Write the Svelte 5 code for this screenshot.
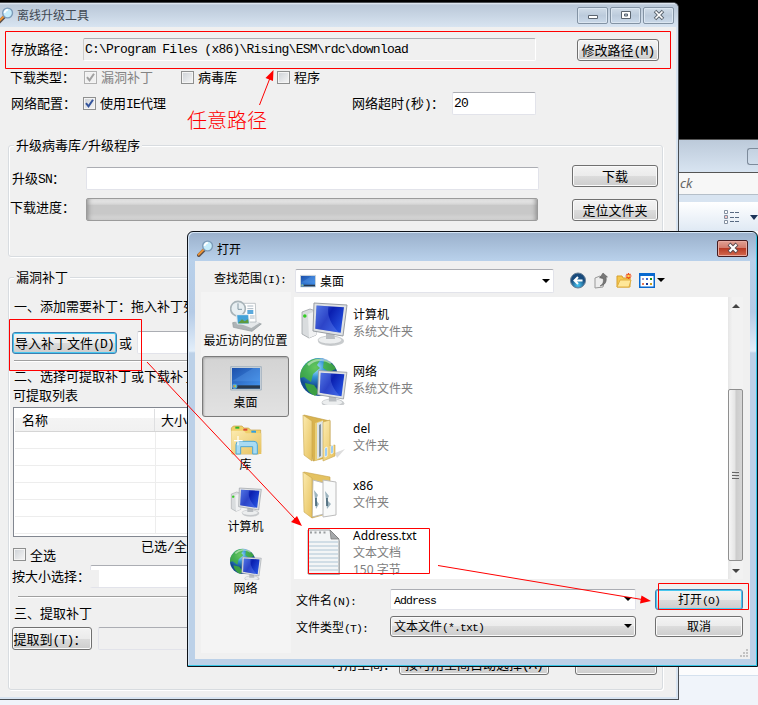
<!-- Offline update tool with its "open file" dialog and the red guide marks on top -->
<script lang="ts">
  type Icon = 'recent' | 'desktop' | 'library' | 'computer' | 'network' | 'del' | 'x86' | 'txt';

  const places: { name: string; icon: Icon; active?: boolean }[] = [
    { name: '最近访问的位置', icon: 'recent' },
    { name: '桌面', icon: 'desktop', active: true },
    { name: '库', icon: 'library' },
    { name: '计算机', icon: 'computer' },
    { name: '网络', icon: 'network' },
  ];

  const files: { name: string; icon: Icon; info: string[] }[] = [
    { name: '计算机', icon: 'computer', info: ['系统文件夹'] },
    { name: '网络', icon: 'network', info: ['系统文件夹'] },
    { name: 'del', icon: 'del', info: ['文件夹'] },
    { name: 'x86', icon: 'x86', info: ['文件夹'] },
    { name: 'Address.txt', icon: 'txt', info: ['文本文档', '150 字节'] },
  ];

  const types = [
    { name: '漏洞补丁', checked: true, disabled: true },
    { name: '病毒库', checked: false, disabled: false },
    { name: '程序', checked: false, disabled: false },
  ];

  // latin runs get the narrow monospace face, the rest stays CJK
  const runs = (text: string) =>
    text.split(/([\x20-\x7e]+)/).filter(Boolean).map(t => ({ t, latin: /^[\x20-\x7e]/.test(t) }));
</script>

{#snippet label(text: string)}
  {#each runs(text) as run}{#if run.latin}<span class="latin">{run.t}</span>{:else}{run.t}{/if}{/each}
{/snippet}

{#snippet check(checked: boolean, disabled: boolean)}
  <span class="check" class:check--off={disabled}>
    {#if checked}
      <svg width="11" height="11" viewBox="0 0 11 11"><path d="M2 5.2 4.5 8.3 9 1.8" fill="none" stroke={disabled ? '#a0a0a0' : '#34549c'} stroke-width="2" /></svg>
    {/if}
  </span>
{/snippet}

{#snippet magnifier()}
  <svg class="magnifier" width="17" height="17" viewBox="0 0 17 17">
    <path d="M1.8 15.2 7 10" stroke="#5c504c" stroke-width="3.6" stroke-linecap="round" />
    <path d="M1.6 14.6 6.4 9.8" stroke="#ef9433" stroke-width="2" stroke-linecap="round" />
    <circle cx="10.6" cy="6" r="4.9" fill="#c5ecfb" stroke="#7d9bb8" stroke-width="1.4" />
    <path d="M7.6 6a3 3 0 0 1 3.2-3" fill="none" stroke="#fff" stroke-width="1.8" />
  </svg>
{/snippet}

{#snippet monitor()}
  <ellipse cx="31" cy="41" rx="13" ry="5" fill="#c9ccce" />
  <ellipse cx="30" cy="40" rx="12" ry="4" fill="#eceeef" stroke="#b3b7ba" stroke-width=".6" />
  <path d="M26 31h8l1 8h-9z" fill="#b9bdc1" />
  <path d="m14 3 33 2-4 31-30-5z" fill="#dfe2e4" stroke="#989da3" stroke-width="1" />
  <path d="m16.500 5.500 27.500 1.700-3.300 25.600-25.400-4z" fill="url(#screen)" />
  <path d="m16.500 5.500 12 .8c-2 10 3 18 10 26l-23.200-3.500z" fill="#7d9dff" opacity=".3" />
{/snippet}

{#snippet picture(icon: Icon, size: number)}
  <svg width={size} height={size} viewBox="0 0 48 48">
    {#if icon === 'computer'}
      <path d="m2 12 8-3 6 2v24l-7 3-7-4z" fill="#d9dcde" stroke="#9da1a5" stroke-width=".8" />
      <path d="m8 14 8-3v24l-7 3z" fill="#f0f1f2" />
      <circle cx="4.800" cy="16" r="1.800" fill="#35cc24" />
      {@render monitor()}
    {:else if icon === 'network'}
      <circle cx="19" cy="20" r="19" fill="url(#globe)" />
      <path d="M4 9c5-7 12-8 17-7l-4 6 3 3-7 6-2 8-7-5-4 1c0-5 1-9 4-12zM24 3c6 1 10 5 12 9l-7 3-6-4zM5 26l9 2 5 7-4 4C9 36 6 32 5 26z" fill="#4bb929" opacity=".75" />
      <path d="M8 8c6-6 16-7 23-2" fill="none" stroke="#fff" stroke-width="2.500" opacity=".45" />
      <g transform="translate(6.500 11) scale(.86)">{@render monitor()}</g>
    {:else if icon === 'desktop'}
      <path d="M1 7h46v35H1z" fill="#cad4dc" stroke="#8fa3b4" stroke-width="1" />
      <path d="M3 9h42v31H3z" fill="url(#desk)" />
      <path d="M3 29 35 9h10v20z" fill="#63a6f2" opacity=".3" />
      <path d="M3 35h42v5H3z" fill="#28394c" />
      <circle cx="7" cy="36.500" r="4" fill="#4aa0dd" />
      <path d="M5 35h2v3H5z" fill="#f2742f" /><path d="M7 35h2v3H7z" fill="#9ee34c" />
    {:else if icon === 'library'}
      <path d="M2 6 5 3h13l3 3h7l3 3h15v33l-3 3H3z" fill="#f0d068" stroke="#c7a147" stroke-width="1" />
      <path d="M2 10h19l3 4h23v31H2z" fill="url(#folder)" />
      <path d="M8 4h6v3H8z" fill="#2fb52f" /><path d="M20 7h6v3h-6z" fill="#db4a37" /><path d="M32 10h7v3h-7z" fill="#2f9fe4" />
      <path d="M9 45V31q0-5 5-5h22q5 0 5 5v14h-7V34H16v11z" fill="#a8dbf3" stroke="#4fa7d3" stroke-width="1.500" />
      <path d="M6 25h13M12 18v14" stroke="#fff" stroke-width="1.800" />
    {:else if icon === 'recent'}
      <path d="m4 34 26-4 17 6-14 11L5 41z" fill="#aeb4b7" stroke="#90979a" stroke-width="1" />
      <path d="m5 32 25-3 15 5-13 8z" fill="#e5e8ea" />
      <path d="M20 5h18l1 28H19z" fill="#fff" stroke="#a5acb1" />
      <path d="M26 9h9M26 13h9M30 24h7M30 27h7" stroke="#aab8c3" stroke-width="1.500" />
      <path d="M26 15h9v6h-9z" fill="#5ba9dc" />
      <circle cx="12" cy="13" r="11" fill="#e8eff2" stroke="#a8b4b9" stroke-width="2.500" />
      <path d="M12 5v9h6" fill="none" stroke="#8499a4" stroke-width="1.500" />
      <path d="M10 22h18l1 14H11z" fill="#42a2d9" stroke="#e8eef1" stroke-width="1.500" />
      <path d="m12 35 6-6 4 3 5-3 1 6z" fill="#5c9a3e" />
    {:else if icon === 'del'}
      <path d="m35 39 10-4-8 9z" fill="#ddd" />
      <path d="m4 1 26 6v36l-17 4z" fill="#d9b34f" stroke="#bd993d" stroke-width=".6" />
      <path d="m15 9 8-3v37l-8 4z" fill="#e9cf79" />
      <path d="m17 9 6-2v36l-6 2z" fill="#dfe5e7" />
      <path d="m19 11 2-1v32l-2 1z" fill="#80919d" />
      <path d="m23 8 7-2v26l5-1v11l-12 5z" fill="url(#folder)" stroke="#c8a64d" stroke-width=".6" />
      <path d="m25 34 2-1v9l-2 1zM31 32l2-1v8l-2 1z" fill="#5cadf0" stroke="#fff" stroke-width=".8" />
      <path d="m3 1 9 6v40L4 41z" fill="url(#folder)" stroke="#c8a64d" stroke-width=".6" />
    {:else if icon === 'x86'}
      <path d="m4 1 26 5v36l-18 5z" fill="#e4c261" stroke="#c6a146" stroke-width=".6" />
      <path d="m13 9 11 3v31l-12 3z" fill="#fff" stroke="#bcbcbc" />
      <path d="m23 9 13 2v33l-13 2z" fill="#f9fafa" stroke="#bcbcbc" />
      <path d="m14 19 4 5-2 5 3 4-3 5z" fill="#9db4bf" /><path d="m25 20 4 5-2 4 4 4-4 5z" fill="#9db4bf" />
      <path d="M16 27v8M27 27v8" stroke="#3f5f70" stroke-width="1.500" />
      <path d="m3 1 9 6v40L4 41z" fill="url(#folder)" stroke="#c8a64d" stroke-width=".6" />
    {:else}
      <path d="M9 4h22l9 9v34H9z" fill="#b9bcbe" />
      <path d="M8 2h22l9 9v35H8z" fill="#f3f5f6" stroke="#9b9fa1" stroke-width="1" />
      <path d="M9 14h29M9 18h29M9 22h29M9 26h29M9 30h29M9 34h29M9 38h29M9 42h29" stroke="#aec5d5" stroke-width="1" />
      <path d="m30 2 9 9h-8z" fill="#a6a9ab" stroke="#777" stroke-width=".7" />
      <path d="M10 4.500h18" stroke="#9a9ea0" stroke-width="2" stroke-dasharray="2 2.500" />
    {/if}
  </svg>
{/snippet}

{#snippet caret()}
  <svg width="8" height="4" viewBox="0 0 8 4"><path d="M0 0h8L4 4z" fill="#000" /></svg>
{/snippet}

<svg class="defs" width="0" height="0">
  <defs>
    <linearGradient id="screen" x2="1" y2=".6"><stop stop-color="#3f66d8" /><stop offset=".5" stop-color="#0a1fb0" /><stop offset="1" stop-color="#244fdc" /></linearGradient>
    <radialGradient id="globe" cx=".4" cy=".25"><stop stop-color="#b5ecff" /><stop offset=".5" stop-color="#3594d6" /><stop offset="1" stop-color="#124b91" /></radialGradient>
    <linearGradient id="desk" x2="1" y2="1"><stop stop-color="#1c50ab" /><stop offset="1" stop-color="#4697ef" /></linearGradient>
    <linearGradient id="folder" x2="1" y2="1"><stop stop-color="#fcebaf" /><stop offset="1" stop-color="#e6c15d" /></linearGradient>
    <radialGradient id="back" cy=".8"><stop stop-color="#49c8f5" /><stop offset="1" stop-color="#184a7c" /></radialGradient>
  </defs>
</svg>

<div class="screen">
  <div class="explorer">
    <div class="explorer__title"><span class="explorer__min"></span></div>
    <div class="explorer__search">ck</div>
    <div class="explorer__tools">
      <svg width="16" height="14" viewBox="0 0 16 14">
        <path d="M.5.5h3v3h-3zM.5 5.500h3v3h-3zM.5 10.500h3v3h-3z" fill="#fff" stroke="#8490a0" />
        <path d="M6 2.500h4M11 2.500h4M6 7.500h4M11 7.500h4M6 11.500h4M11 11.500h4" stroke="#586a82" />
        <path d="M1.500 6.500h1v1h-1z" fill="#d22" />
      </svg>
      <svg width="8" height="5" viewBox="0 0 8 5"><path d="M0 0h8L4 5z" fill="#1c3459" /></svg>
    </div>
    <div class="explorer__pane"></div>
  </div>

  <div class="window">
    <header class="window__title">
      {@render magnifier()}
      <span class="window__name">离线升级工具</span>
      <span class="winbtn"><svg width="12" height="12"><path d="M1.500 6.500h9v3h-9z" fill="#fff" stroke="#5b6570" /></svg></span>
      <span class="winbtn"><svg width="12" height="12"><path d="M1.500 2.500h9v7h-9z" fill="#fff" stroke="#5b6570" /><path d="M4.500 5h3v2h-3z" fill="#b9c9da" stroke="#5b6570" /></svg></span>
      <span class="winbtn"><svg width="12" height="12"><path d="m2 2 8 8M10 2l-8 8" stroke="#5b6570" stroke-width="3.600" /><path d="m2.500 2.500 7 7M9.500 2.500l-7 7" stroke="#fff" stroke-width="1.700" /></svg></span>
    </header>

    <div class="window__body">
      <div class="row row--path">
        <span class="cap">存放路径：</span>
        <span class="field field--path">{@render label('C:\\Program Files (x86)\\Rising\\ESM\\rdc\\download')}</span>
        <button class="btn btn--modify">{@render label('修改路径(M)')}</button>
      </div>
      <div class="row row--types">
        <span class="cap">下载类型：</span>
        {#each types as type}
          <span class="option" class:option--off={type.disabled}>{@render check(type.checked, type.disabled)}{type.name}</span>
        {/each}
      </div>
      <div class="row row--net">
        <span class="cap">网络配置：</span>
        <span class="option">{@render check(true, false)}<span>{@render label('使用IE代理')}</span></span>
        <span class="timeout">{@render label('网络超时(秒)：')}</span>
        <span class="field field--timeout">{@render label('20')}</span>
      </div>

      <section class="group group--update">
        <div class="group__legend">{@render label('升级病毒库/升级程序')}</div>
        <div class="row row--sn">
          <span class="cap">{@render label('升级SN：')}</span>
          <span class="field field--wide"></span>
          <button class="btn btn--side">下载</button>
        </div>
        <div class="row row--progress">
          <span class="cap">下载进度：</span>
          <span class="progress"></span>
          <button class="btn btn--side">定位文件夹</button>
        </div>
      </section>

      <section class="group group--patch">
        <div class="group__legend">漏洞补丁</div>
        <div class="line line--first">一、添加需要补丁：拖入补丁列表</div>
        <div class="row row--import">
          <button class="btn btn--focus btn--import">{@render label('导入补丁文件(D)')}</button>
          <span>或</span>
          <span class="field field--fill"></span>
        </div>
        <div class="rule"></div>
        <div class="line line--second">二、选择可提取补丁或下载补丁</div>
        <div class="line line--list">可提取列表</div>
        <div class="table">
          <div class="table__head"><span>名称</span><span>大小</span></div>
          {#each Array(6) as _}
            <div class="table__row"><span></span><span></span></div>
          {/each}
        </div>
        <div class="row row--all">
          <span class="option">{@render check(false, false)}全选</span>
          <span class="count">{@render label('已选/全部')}</span>
        </div>
        <div class="row row--size">
          <span>按大小选择：</span>
          <span class="field field--fill"><span class="field__patch"></span></span>
        </div>
        <div class="rule rule--low"></div>
        <div class="line line--third">三、提取补丁</div>
        <div class="row row--extract">
          <button class="btn btn--extract">{@render label('提取到(T)：')}</button>
          <span class="field field--fill field--grey"></span>
        </div>
        <div class="row row--space">
          <span>可用空间：</span>
          <button class="btn btn--auto">{@render label('按可用空间自动选择(A)')}</button>
          <button class="btn btn--last"> </button>
        </div>
      </section>
    </div>
  </div>

  <div class="dialog">
    <header class="dialog__title">
      {@render magnifier()}
      <span>打开</span>
      <span class="dialog__close"><svg width="12" height="12"><path d="m2 2 8 8M10 2l-8 8" stroke="#5a4a50" stroke-width="4" /><path d="m2.500 2.500 7 7M9.500 2.500l-7 7" stroke="#fff" stroke-width="2.200" /></svg></span>
    </header>

    <div class="dialog__body">
      <aside class="side">
        <div class="side__label">{@render label('查找范围(I):')}</div>
        <nav class="places">
          {#each places as place}
            <div class="place" class:place--active={place.active}>
              {@render picture(place.icon, 32)}
              <span>{place.name}</span>
            </div>
          {/each}
        </nav>
      </aside>

      <section class="main">
        <div class="toolbar">
          <div class="combo combo--look">{@render picture('desktop', 16)}<span>桌面</span>{@render caret()}</div>
          <div class="tools">
            <svg width="16" height="17" viewBox="0 0 16 17"><circle cx="8" cy="8.500" r="7.500" fill="url(#back)" stroke="#677e94" /><path d="M12.500 8.500H5M8 5 4.500 8.500 8 12" fill="none" stroke="#fff" stroke-width="2" /></svg>
            <svg width="16" height="17" viewBox="0 0 16 17"><path d="m2 6 5-2 1 2 4 1-2 8-8 1z" fill="#ededed" stroke="#999" /><path d="M7 14c3-2 4-4 3-8H6.500L10 1l4.500 4H13c1 5-1 8-6 9z" fill="#777" stroke="#555" stroke-width=".5" /></svg>
            <svg width="16" height="17" viewBox="0 0 16 17"><path d="M1 4h5l1 2h7v9H1z" fill="#f5c84f" stroke="#d79f2d" /><path d="m1 15 3-7h11l-2 7z" fill="#ffe798" stroke="#e0ae40" /><path d="M12.500 1v6M9.500 4h6M10.500 2l4 4M14.500 2l-4 4" stroke="#ee4b17" stroke-width="1.200" /><circle cx="12.500" cy="4" r="1.300" fill="#ffd653" /></svg>
            <svg width="16" height="17" viewBox="0 0 16 17"><path d="M.75 2h14.500v13.250H.75z" fill="#fff" stroke="#0868cf" stroke-width="1.500" /><path d="M0 1h16v3H0z" fill="#0868cf" /><path d="M3 6h2v2H3z" fill="#a197c2" /><path d="M7 6h2v2H7z" fill="#3569d6" /><path d="M11 6h2v2h-2z" fill="#178c15" /><path d="M3 11h2v2H3z" fill="#e77955" /><path d="M7 11h2v2H7z" fill="#163796" /><path d="M11 11h2v2h-2z" fill="#cba022" /></svg>
            {@render caret()}
          </div>
        </div>

        <div class="list">
          <div class="list__items">
            {#each files as file}
              <div class="file" class:file--long={file.info.length > 1}>
                {@render picture(file.icon, 48)}
                <div class="file__text">
                  <div>{file.name}</div>
                  {#each file.info as info}<div class="file__info">{info}</div>{/each}
                </div>
              </div>
            {/each}
          </div>
          <div class="scroll">
            <svg width="8" height="4" viewBox="0 0 8 4"><path d="M0 4h8L4 0z" fill="#444" /></svg>
            <div class="scroll__thumb"><i></i><i></i><i></i></div>
            <svg width="8" height="4" viewBox="0 0 8 4"><path d="M0 0h8L4 4z" fill="#444" /></svg>
          </div>
        </div>

        <div class="entry">
          <span class="entry__label">{@render label('文件名(N):')}</span>
          <div class="combo combo--name"><span>{@render label('Address')}</span>{@render caret()}</div>
          <button class="btn btn--focus btn--dialog">{@render label('打开(O)')}</button>
        </div>
        <div class="entry entry--type">
          <span class="entry__label">{@render label('文件类型(T):')}</span>
          <div class="combo combo--type"><span>{@render label('文本文件(*.txt)')}</span>{@render caret()}</div>
          <button class="btn btn--dialog">取消</button>
        </div>
        <svg class="grip" width="9" height="9"><path d="M6 0h2v2H6zM3 3h2v2H3zM6 3h2v2H6zM0 6h2v2H0zM3 6h2v2H3zM6 6h2v2H6z" fill="#c3c3c3" /></svg>
      </section>
    </div>
  </div>

  <!-- guide marks -->
  <svg class="marks" width="758" height="705" viewBox="0 0 758 705">
    <g fill="none" stroke="#f00">
      <path d="M5.500 31.500h665v37H5.500zM9.500 319.500h132v51H9.500zM308.500 528.500h121v45h-121zM658.500 583.500h90v26h-90z" />
      <path d="M259.500 105 270 78M147 362l148 157M438 565.500l204 34" />
    </g>
    <path d="m273.500 70-.5 11-7.500-3zM302 526l-11-4 6-6zM651 601l-11 2.500 1.500-8z" fill="#f00" />
    <text x="187" y="128">任意路径</text>
  </svg>
</div>

<style>
  :global(body) { background: #000; overflow: hidden; }

  .screen {
    position: relative; width: 758px; height: 705px; overflow: hidden;
    background: #000; color: #000; white-space: nowrap;
    font: 13px/16px "Noto Sans CJK SC", sans-serif;
  }
  .screen svg { flex-shrink: 0; display: block; }
  .defs { position: absolute; }
  .latin {
    font-family: "Liberation Mono", monospace; font-size: 13px; letter-spacing: -0.78px;
    line-height: 1; white-space: pre;
  }

  /* Explorer window behind */
  .explorer {
    position: absolute; left: 0; top: 139px; width: 758px; height: 566px;
    box-sizing: border-box; border-top: 1px solid #555; background: #f0f4fa;
  }
  .explorer__title {
    height: 32px; display: flex; justify-content: flex-end; align-items: center;
    background: linear-gradient(#bccada, #d8e4f1);
  }
  .explorer__min { width: 10px; height: 15px; border: 1px solid #7d8b9b; border-right: 0; border-radius: 3px 0 0 3px; }
  .explorer__search {
    height: 21px; padding-left: 680px; border-top: 1px solid #555; border-bottom: 1px solid #b5bfc9;
    background: #f7f7f7; color: #666; font: italic 13px/21px "Noto Sans", sans-serif;
  }
  .explorer__tools {
    height: 28px; margin-top: 7px; padding-top: 1px; display: flex; justify-content: flex-end; align-items: center; gap: 10px;
    background: linear-gradient(#fff, #dfe9f4); box-shadow: 0 -7px #d8e4f1;
  }
  .explorer__pane { height: 444px; background: #fcfcfd; border-bottom: 1px solid #d5e1ee; }

  /* Main window */
  .window {
    position: absolute; left: 0; top: 2px; width: 679px; height: 698px; box-sizing: border-box;
    border: 1px solid #4a4e53; border-left: 0; border-radius: 0 6px 0 0;
    background: #d8e4f1; overflow: hidden;
  }
  .window__title {
    height: 24px; display: flex; align-items: center; padding-right: 4px;
    background: linear-gradient(#e8eef5, #bac8d8 2px, #d8e4f1);
  }
  .magnifier { margin-left: -3px; }
  .window__name { flex: 1; margin-left: 3px; font-size: 12px; color: #404852; }
  .winbtn {
    width: 29px; height: 15px; margin-left: 2px; display: flex; align-items: center; justify-content: center;
    border: 1px solid #8393a4; border-radius: 2px; background: linear-gradient(#d0dce8, #bccbdc 50%, #cad9e9);
    box-shadow: inset 0 0 0 1px #dbe6f1;
  }
  .window__body { width: 676px; height: 670px; background: #f0f0f0; overflow: hidden; }

  .row { display: flex; align-items: center; }
  .cap { flex-shrink: 0; }
  .row--path { margin-top: 11px; padding-left: 11px; height: 23px; }
  .row--path .cap { width: 72px; margin-top: -2px; }
  .row--types { margin-top: 6px; padding-left: 10px; height: 20px; }
  .row--types .cap { width: 74px; }
  .row--types .option { width: 97px; }
  .row--types .option + .option { width: 96px; }
  .row--net { margin-top: 5px; padding-left: 11px; height: 23px; }
  .row--net .cap { width: 72px; margin-top: -1px; }
  .row--net .option { width: 269px; margin-top: -1px; }
  .timeout { width: 100px; margin-top: -1px; }

  .field {
    box-sizing: border-box; height: 23px; padding: 0 1px; line-height: 17px;
    border: 1px solid #e2e3ea; border-top-color: #abadb3; border-radius: 2px; background: #fff;
  }
  .field--path { width: 453px; margin-right: 41px; background: #f0f0f0; border-color: #fff; border-top-color: #abadb3; border-left-color: #ccc; }
  .field--timeout { width: 84px; }
  .field--wide { width: 453px; margin-right: 33px; }
  .field--fill { flex: 1; margin-right: 30px; }
  .field--grey { background: #f0f0f0; }
  .field__patch { display: block; width: 9px; height: 17px; margin: 4px 0 0 -2px; background: #f0f0f0; }

  .option { display: flex; align-items: center; gap: 4px; }
  .option--off { color: #838383; }
  .check {
    width: 11px; height: 11px; border: 1px solid #8e8f8f; box-shadow: inset 0 0 0 1px #f4f4f4;
    background: linear-gradient(135deg, #cdd1d6, #f6f6f6);
  }
  .check--off { border-color: #b1b1b1; background: #f0f0f0; }

  .btn {
    box-sizing: border-box; height: 22px; padding: 0; flex-shrink: 0;
    border: 1px solid #707070; border-radius: 3px; color: #000; font: inherit; line-height: 18px;
    background: linear-gradient(#f3f3f3, #ebebeb 50%, #dcdcdc 50%, #cdcdcd);
    box-shadow: inset 0 0 0 1px #fafafa;
  }
  .btn--focus { border-color: #3c7fb1; box-shadow: inset 0 0 0 1px #48c7ef; }
  .btn--modify { width: 82px; }
  .btn--side { width: 86px; }
  .btn--import { width: 105px; }
  .btn--extract { width: 80px; height: 23px; margin-right: 6px; padding-right: 4px; }

  .group {
    box-sizing: border-box; width: 655px; margin-left: 8px;
    border: 1px solid #d8dce0; border-radius: 3px; box-shadow: inset 1px 1px #fff, 1px 1px #fff;
  }
  .group--update { margin-top: 30px; height: 112px; }
  .group--patch { margin-top: 20px; height: 413px; }
  .group__legend { width: max-content; height: 16px; margin: -9px 0 0 5px; padding: 0 2px; background: #f0f0f0; }

  .row--sn { height: 25px; margin-top: 12px; padding-left: 3px; }
  .row--sn .cap { width: 74px; }
  .row--sn .field { margin-top: 2px; }
  .row--sn .btn { margin-top: -4px; }
  .row--progress { height: 23px; margin-top: 8px; padding-left: 1px; }
  .row--progress .cap { width: 76px; margin-top: -5px; }
  .row--progress .btn { margin-top: 1px; }
  .progress {
    box-sizing: border-box; width: 452px; height: 23px; margin-right: 34px;
    border: 1px solid #9b9b9b; border-radius: 2px;
    background: linear-gradient(#eee, #d6d6d6 25%, #c8c8c8 30%, #c8c8c8 70%, #dadada);
    box-shadow: inset 4px 0 5px -3px #888, inset -4px 0 5px -3px #888;
  }

  .line { height: 20px; line-height: 20px; padding-left: 5px; }
  .line--first { margin-top: 11px; }
  .line--second { margin-top: 5px; }
  .line--list { height: 18px; line-height: 18px; padding-left: 4px; }
  .line--third { margin-top: 6px; }
  .row--import { margin-top: 15px; padding-left: 3px; height: 23px; gap: 2px; }
  .row--import .field { margin-left: 3px; }
  .rule { height: 1px; margin: 6px 8px 0 5px; background: #a0a0a0; box-shadow: 0 1px #fff; }
  .rule--low { margin-top: 8px; margin-left: 9px; }

  .table {
    box-sizing: border-box; height: 130px; margin: 3px 8px 0 4px;
    border: 1px solid #828790; background: #fff; padding: 1px; overflow: hidden;
  }
  .table__head {
    height: 22px; display: flex; line-height: 22px; border-bottom: 1px solid #d5d5d5;
    background: linear-gradient(#fff 40%, #f4f4f4 42%, #f1f1f1);
  }
  .table__head span:first-child { box-sizing: border-box; width: 140px; padding-left: 7px; border-right: 1px solid #dedfe1; }
  .table__head span + span { padding-left: 6px; }
  .table__row { height: 16px; display: flex; border-bottom: 1px solid #ededed; }
  .table__row span:first-child { width: 140px; border-right: 1px solid #ededed; }

  .row--all { height: 28px; padding-left: 4px; }
  .row--all .option { width: 128px; margin-top: 7px; }
  .count { margin-top: -11px; }
  .row--size { height: 23px; padding-left: 3px; }
  .row--size > span:first-child { margin-top: -1px; }
  .row--extract { margin-top: 4px; height: 23px; padding-left: 3px; }
  .row--space { margin-top: 3px; height: 22px; padding-left: 322px; }
  .row--space > span { width: 68px; }
  .btn--auto { width: 150px; margin-right: 26px; }
  .btn--last { width: 82px; }

  /* Dialog */
  .dialog {
    position: absolute; left: 187px; top: 231px; width: 571px; height: 436px; box-sizing: border-box;
    border: 1px solid #0d1117; border-radius: 6px 6px 0 0; overflow: hidden;
    background: linear-gradient(#9ab0cb, #b8d0ea 28px, #b5cbe6 80px, #e2eefa 119px, #bcd1e8 121px);
    box-shadow: inset -1px -1px #35c5e5, inset 1px 1px #d5e5f5;
    font-size: 12px;
  }
  .dialog .latin { font-size: 11.5px; letter-spacing: -0.9px; }
  .dialog__title { height: 29px; display: flex; align-items: center; gap: 3px; padding: 4px 9px 0 12px; box-sizing: border-box; }
  .dialog__close {
    width: 29px; height: 15px; margin-left: auto; margin-top: -1px; display: flex; align-items: center; justify-content: center;
    border: 1px solid #451c20; border-radius: 2px; box-shadow: inset 0 0 0 1px #e9aaa0;
    background: linear-gradient(#e0a194, #d2796a 48%, #b83b25 50%, #d46a50);
  }
  .dialog__body { display: flex; margin: 0 7px; height: 398px; background: #f0f0f0; }

  .side { width: 99px; flex-shrink: 0; }
  .side__label { height: 31px; line-height: 34px; padding-left: 19px; }
  .places { box-sizing: border-box; width: 90px; height: 361px; margin-left: 6px; padding: 2px 2px 0 1px; background: #f4f4f4; }
  .place {
    box-sizing: border-box; height: 62px; padding-top: 6px; text-align: center;
    display: flex; flex-direction: column; align-items: center; line-height: 16px;
  }
  .place--active {
    height: 61px; margin-bottom: 1px; padding-top: 5px;
    border: 1px solid #7b7b7b; border-radius: 3px; background: linear-gradient(#d3d3d3, #e2e2e2);
    box-shadow: inset 1px 1px 2px #aaa;
  }

  .main { flex: 1; min-width: 0; position: relative; }
  .toolbar { display: flex; padding: 8px 0 0 1px; }
  .combo {
    box-sizing: border-box; display: flex; align-items: center; gap: 4px; padding: 0 3px 0 4px;
    border: 1px solid #e2e3ea; border-top-color: #abadb3; border-radius: 2px; background: #fff;
  }
  .combo span { flex: 1; }
  .combo--look { width: 259px; height: 24px; }
  .tools { display: flex; align-items: center; gap: 7px; margin: -2px 0 0 16px; }
  .tools > svg:last-child { margin-left: -5px; }

  .list { display: flex; width: 449px; height: 282px; margin-top: 4px; background: #fff; overflow: hidden; }
  .list__items { flex: 1; padding: 3px 0 0 6px; }
  .file { height: 57px; display: flex; gap: 5px; }
  .file__text { line-height: 17px; padding-top: 6px; font-family: "Noto Sans", "Noto Sans CJK SC", sans-serif; }
  .file--long .file__text { padding-top: 0; margin-top: -1px; }
  .file__info { color: #808080; }

  .scroll {
    box-sizing: border-box; width: 15px; padding: 7px 0 6px; display: flex; flex-direction: column; align-items: center;
    background: linear-gradient(90deg, #e6e6e6, #f2f2f2 30%);
  }
  .scroll__thumb {
    box-sizing: border-box; width: 15px; height: 172px; margin: auto 0 8px; display: flex; flex-direction: column;
    align-items: center; justify-content: center; gap: 1px;
    border: 1px solid #8f8f8f; border-radius: 2px; background: linear-gradient(90deg, #f6f6f6, #e4e4e4 48%, #ccc 52%, #d6d6d6);
  }
  .scroll__thumb i { width: 7px; height: 1px; border-bottom: 1px solid #666; background: #ddd; }

  .entry { display: flex; align-items: center; height: 22px; margin-top: 9px; padding-left: 2px; }
  .entry--type { margin-top: 5px; }
  .entry__label { width: 94px; margin-top: 1px; }
  .entry .combo { width: 246px; height: 21px; margin-right: 19px; }
  .entry .combo--name, .entry .combo--type { padding-left: 3px; }
  .combo--type {
    border-color: #707070; border-radius: 3px;
    background: linear-gradient(#f3f3f3, #ebebeb 50%, #dcdcdc 50%, #cdcdcd); box-shadow: inset 0 0 0 1px #fafafa;
  }
  .btn--dialog { width: 88px; height: 21px; }
  .grip { position: absolute; right: 1px; bottom: 1px; }

  .marks { position: absolute; left: 0; top: 0; }
  .marks text { fill: #f00; font: 300 20px "Noto Sans CJK SC", sans-serif; }
</style>
